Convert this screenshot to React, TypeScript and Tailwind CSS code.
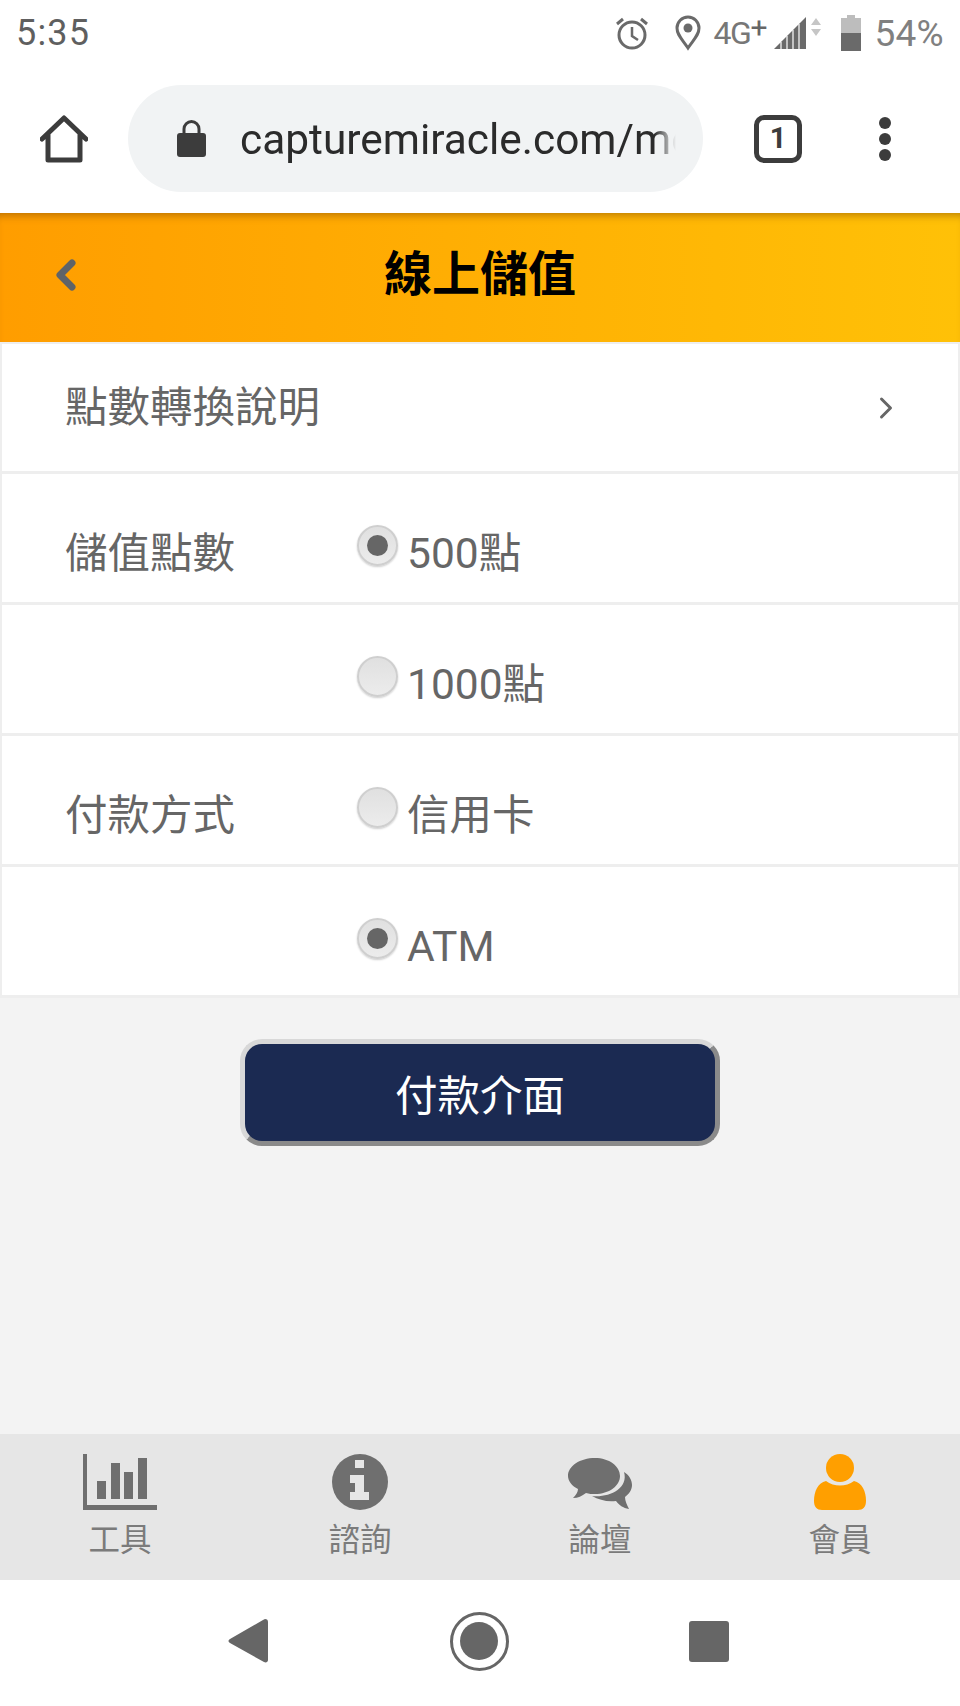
import React from 'react';
import { ChevronLeft, ChevronRight } from 'lucide-react';

const cjk = "font-['Roboto','Noto_Sans_CJK_TC',sans-serif]";

const StatusBar = () => (
  <div className="h-[70px] flex items-center justify-between pl-[16px] pr-[16px] pb-[4px] text-[#5f5f5f]">
    <span className="text-[36px] tracking-[1.2px] leading-none">5:35</span>
    <div className="flex items-center">
      <svg width="36" height="36" viewBox="0 0 36 36" fill="none" stroke="#6a6a6a" strokeWidth="3">
        <circle cx="18" cy="20" r="13" />
        <path d="M18 12v9l6 4" strokeWidth="2.5" />
        <path d="M3 9l6-5M33 9l-6-5" />
      </svg>
      <svg className="ml-[24px]" width="28" height="36" viewBox="0 0 28 36" fill="none">
        <path d="M14 33C8 24 3 20 3 13a11 11 0 0 1 22 0c0 7-5 11-11 20z" stroke="#6a6a6a" strokeWidth="3" />
        <circle cx="14" cy="13" r="4.5" fill="#6a6a6a" />
      </svg>
      <span className="ml-[12px] text-[32px] leading-none tracking-[-1.5px] text-[#777]">4G</span>
      <span className="text-[30px] leading-none -mt-[10px] text-[#666]">+</span>
      <svg className="ml-[6px]" width="48" height="36" viewBox="0 0 48 36">
        <path d="M1 34L33 2v32z" fill="#6a6a6a" />
        <path d="M8 34V27M14 34V21M20 34V15M26 34V9" stroke="#fff" strokeWidth="1.2" />
        <path d="M38 10l5-7 5 7zM38 14l5 7 5-7z" fill="#c6c6c6" />
      </svg>
      <svg className="ml-[20px]" width="20" height="36" viewBox="0 0 20 36">
        <path d="M6 0h8v3h6v15H0V3h6z" fill="#bdbdbd" />
        <rect y="18" width="20" height="18" fill="#6a6a6a" />
      </svg>
      <span className="ml-[13px] text-[37px] leading-none tracking-[0.3px] text-[#808080]">54%</span>
    </div>
  </div>
);

const Toolbar = () => (
  <div className="h-[143px] flex items-center pb-[6px]">
    <svg className="ml-[40px]" width="48" height="48" viewBox="0 0 48 48" fill="none" stroke="#3c3c3c" strokeWidth="5" strokeLinejoin="round" strokeLinecap="round">
      <path d="M2 24L24 3l22 21M8 19v26h32V19" />
    </svg>
    <div className="ml-[40px] w-[575px] h-[107px] rounded-full bg-[#f1f3f4] flex items-center">
      <svg className="ml-[49px] shrink-0" width="29" height="37" viewBox="0 0 29 37">
        <path d="M7 15V9a7.5 7.5 0 0 1 15 0v6" fill="none" stroke="#3c3c3c" strokeWidth="3" />
        <rect y="13" width="29" height="24" rx="3" fill="#3c3c3c" />
      </svg>
      <div className="ml-[34px] mt-[3px] w-[436px] overflow-hidden whitespace-nowrap text-[42.4px] leading-[50px] text-[#2b2b2b] font-['Roboto',sans-serif] [mask-image:linear-gradient(to_right,black_95%,transparent)]">
        capturemiracle.com/mo
      </div>
    </div>
    <div className="ml-[51px] w-[48px] h-[48px] rounded-[10px] border-[5px] border-[#3c3c3c] flex items-center justify-center text-[29px] font-bold leading-none text-[#3c3c3c]">
      1
    </div>
    <div className="ml-[77px] flex flex-col gap-[4px]">
      <span className="w-[12px] h-[12px] rounded-full bg-[#3c3c3c]" />
      <span className="w-[12px] h-[12px] rounded-full bg-[#3c3c3c]" />
      <span className="w-[12px] h-[12px] rounded-full bg-[#3c3c3c]" />
    </div>
  </div>
);

const Radio = ({ checked }: { checked?: boolean }) => (
  <span className="w-[41px] h-[41px] rounded-full border-2 border-[#cfcfcf] bg-gradient-to-b from-[#e0e0e0] to-[#ececec] shadow-[0_1px_2px_rgba(0,0,0,0.2)] flex items-center justify-center shrink-0">
    {checked && <span className="w-[21px] h-[21px] rounded-full bg-[#666]" />}
  </span>
);

const rows = [
  { label: '儲值點數', option: '500點', checked: true },
  { label: '', option: '1000點', checked: false },
  { label: '付款方式', option: '信用卡', checked: false },
  { label: '', option: 'ATM', checked: true },
];

const FormRow = ({ label, option, checked }: { label: string; option: string; checked: boolean }) => (
  <div className="h-[131px] bg-white border-x-2 border-b-[3px] border-[#eeeeee] flex items-start pt-[50px] text-[42.5px] leading-[60px] text-[#666]">
    <span className="w-[355px] pl-[63px] shrink-0">{label}</span>
    <div className="flex items-start">
      <span className="mt-[1px]">
        <Radio checked={checked} />
      </span>
      <span className="ml-[9px]">{option}</span>
    </div>
  </div>
);

const BarsIcon = () => (
  <svg width="74" height="56" viewBox="0 0 74 56" fill="#6f6f6f">
    <path d="M0 0h4v51h70v5H0z" />
    <rect x="14" y="27" width="9" height="18" />
    <rect x="28" y="9" width="9" height="36" />
    <rect x="41" y="18" width="9" height="27" />
    <rect x="55" y="4" width="9" height="41" />
  </svg>
);

const InfoIcon = () => (
  <svg width="56" height="56" viewBox="0 0 56 56">
    <circle cx="28" cy="28" r="28" fill="#6f6f6f" />
    <path d="M23 6h9v8h-9zM18 21h14v17h5v8H18v-8h5v-9h-5z" fill="#e6e6e6" />
  </svg>
);

const ChatIcon = () => (
  <svg width="64" height="52" viewBox="0 0 64 52" fill="#6f6f6f">
    <path d="M27 0c14 0 25 8 25 18S41 36 27 36c-3 0-6 0-9-1-4 3-8 5-13 5 3-3 5-6 5-9C4 28 0 23 0 18 0 8 12 0 27 0z" />
    <path d="M56 14c5 3 8 8 8 13 0 5-3 9-7 12 0 4 2 8 4 12-6-1-10-4-13-8-9 1-17-1-24-5 16 2 37-7 32-24z" />
  </svg>
);

const UserIcon = () => (
  <svg width="52" height="56" viewBox="0 0 52 56" fill="#ff9f00">
    <circle cx="26" cy="14" r="14" />
    <path d="M12 27c8 6 20 6 28 0 8 2 12 10 12 20 0 6-3 9-8 9H8c-5 0-8-3-8-9 0-10 4-18 12-20z" />
  </svg>
);

const tabs = [
  { label: '工具', icon: <BarsIcon /> },
  { label: '諮詢', icon: <InfoIcon /> },
  { label: '論壇', icon: <ChatIcon /> },
  { label: '會員', icon: <UserIcon /> },
];

export default function App() {
  return (
    <div className={`w-[960px] h-[1706px] bg-white flex flex-col overflow-hidden ${cjk}`}>
      <StatusBar />
      <Toolbar />

      {/* Page header */}
      <header className="h-[129px] bg-gradient-to-r from-[#ff9d00] to-[#ffc107] shadow-[inset_0_8px_8px_-6px_rgba(120,70,0,0.55)] flex items-center relative shrink-0">
        <ChevronLeft className="absolute left-[42px] top-[38px] text-[#5f6368]" size={48} strokeWidth={3.5} />
        <h1 className="w-full text-center text-[48px] font-bold leading-none text-black -mt-[6px]">線上儲值</h1>
      </header>

      <main className="flex-1 bg-[#f3f3f3] flex flex-col">
        <div className="h-[132px] bg-white border-x-2 border-t-2 border-b-[3px] border-[#eeeeee] flex items-center justify-between pl-[63px] pr-[54px] text-[42.5px] text-[#666]">
          <span>點數轉換說明</span>
          <ChevronRight className="text-[#666]" size={36} strokeWidth={2} />
        </div>
        {rows.map((row, i) => (
          <FormRow key={i} {...row} />
        ))}
        <div className="flex justify-center mt-[41px]">
          <button className="w-[480px] h-[107px] pt-[8px] rounded-[22px] bg-[#1b2a52] border-[5px] border-t-[#d8d8d8] border-l-[#d8d8d8] border-r-[#8a8a8a] border-b-[#8a8a8a] text-white text-[42.5px]">
            付款介面
          </button>
        </div>
      </main>

      <nav className="h-[146px] bg-[#e6e6e6] grid grid-cols-4 shrink-0">
        {tabs.map((tab) => (
          <div key={tab.label} className="flex flex-col items-center pt-[19px]">
            <div className="h-[57px] flex items-end">{tab.icon}</div>
            <span className="text-[31.5px] leading-[40px] mt-[11px] text-[#7b7b7b]">{tab.label}</span>
          </div>
        ))}
      </nav>

      {/* Android nav buttons */}
      <div className="h-[126px] flex items-center justify-center pb-[4px] pr-[4px] shrink-0">
        <svg width="40" height="44" viewBox="0 0 40 44" fill="#666">
          <path d="M37 0c2 0 3 1 3 3v38c0 2-2 3-4 2L2 24c-2-1-2-3 0-4L35 1z" />
        </svg>
        <span className="ml-[182px] w-[59px] h-[59px] rounded-full border-[3px] border-[#666] flex items-center justify-center">
          <span className="w-[38px] h-[38px] rounded-full bg-[#666]" />
        </span>
        <span className="ml-[180px] w-[40px] h-[41px] rounded-[3px] bg-[#666]" />
      </div>
    </div>
  );
}
